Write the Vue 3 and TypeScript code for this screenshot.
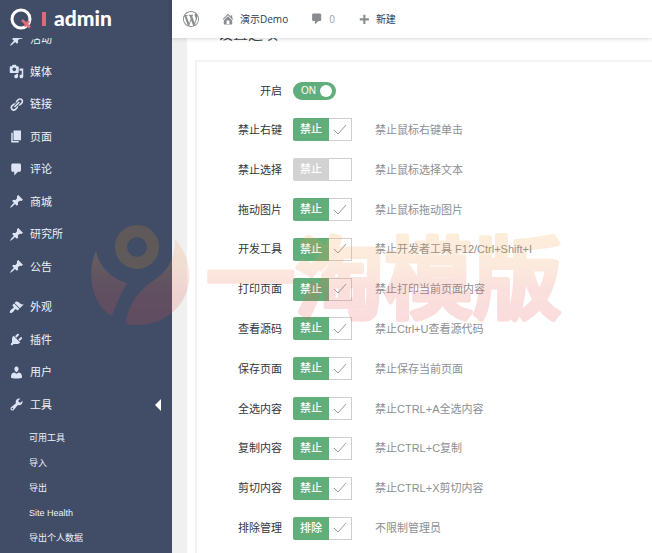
<script setup lang="ts">
import { reactive, ref } from 'vue'

interface MenuItem {
  label: string
  icon: string
  open?: boolean
}

interface Option {
  id: string
  label: string
  action: string
  hint: string
  on: boolean
}

const icons: Record<string, string> = {
  post: 'M10.44 3.02l1.82-1.82 6.36 6.35-1.83 1.82c-1.05-.68-2.48-.57-3.41.36l-.75.75c-.92.93-1.04 2.35-.35 3.41l-1.83 1.82-2.41-2.41-2.8 2.79c-.42.42-3.38 2.71-3.8 2.29s1.86-3.39 2.28-3.81l2.79-2.79L4.1 9.36l1.83-1.82c1.05.69 2.48.57 3.4-.36l.75-.75c.93-.92 1.05-2.35.36-3.41z',
  media: 'M13 11V4c0-.55-.45-1-1-1h-1.67L9 1H5L3.67 3H2c-.55 0-1 .45-1 1v7c0 .55.45 1 1 1h10c.55 0 1-.45 1-1zM7 4.5c1.38 0 2.5 1.12 2.5 2.5S8.38 9.5 7 9.5 4.5 8.38 4.5 7 5.62 4.5 7 4.5zM14 6h5v10.5c0 1.38-1.12 2.5-2.5 2.5S14 17.88 14 16.5s1.12-2.5 2.5-2.5c.17 0 .34.02.5.05V9h-3V6zm-4 8.05V13h2v3.5c0 1.38-1.12 2.5-2.5 2.5S7 17.88 7 16.5 8.12 14 9.5 14c.17 0 .34.02.5.05z',
  links: 'M17.74 2.76c1.68 1.69 1.68 4.41 0 6.1l-1.53 1.52c-1.12 1.12-2.7 1.47-4.14 1.09l2.62-2.61.76-.77.76-.76c.84-.84.84-2.2 0-3.04-.84-.85-2.2-.85-3.04 0l-.77.76-3.38 3.38c-.37-1.44-.02-3.02 1.1-4.14l1.52-1.53c1.69-1.68 4.42-1.68 6.1 0zM8.59 13.43l5.34-5.34c.42-.42.42-1.1 0-1.52-.44-.43-1.13-.39-1.53 0l-5.33 5.34c-.42.42-.42 1.1 0 1.52.44.43 1.13.39 1.52 0zm-.76 2.29l4.14-4.15c.38 1.44.03 3.02-1.09 4.14l-1.52 1.53c-1.69 1.68-4.41 1.68-6.1 0-1.68-1.68-1.68-4.42 0-6.1l1.53-1.52c1.12-1.12 2.7-1.47 4.14-1.1l-4.14 4.15c-.85.84-.85 2.2 0 3.05.84.84 2.2.84 3.04 0z',
  page: 'M6 15V2h10v13H6zm-1 1h8v2H3V5h2v11z',
  comments: 'M5 2h9c1.1 0 2 .9 2 2v7c0 1.1-.9 2-2 2h-2l-5 5v-5H5c-1.1 0-2-.9-2-2V4c0-1.1.9-2 2-2z',
  appearance: 'M14.48 11.06L7.41 3.99l1.5-1.5c.5-.56 2.3-.47 3.51.32 1.21.8 1.43 1.28 2.91 2.1 1.18.64 2.45 1.26 4.45.85zm-.71.71L6.7 4.7 4.93 6.47c-.39.39-.39 1.02 0 1.41l1.06 1.06c.39.39.39 1.03 0 1.42-.6.6-1.43 1.11-2.21 1.69-.35.26-.7.53-1.01.84C1.43 14.23.4 16.08 1.4 17.07c.99 1 2.84-.03 4.18-1.36.31-.31.58-.66.85-1.02.57-.78 1.08-1.61 1.69-2.21.39-.39 1.02-.39 1.41 0l1.06 1.06c.39.39 1.02.39 1.41 0z',
  plugins: 'M13.11 4.36L9.87 7.6 8 5.73l3.24-3.24c.35-.34 1.05-.2 1.56.32.52.51.66 1.21.31 1.55zm-8 1.77l.91-1.12 9.01 9.01-1.19.84c-.71.71-2.63 1.16-3.82 1.16H6.14L4.9 17.26c-.59.59-1.54.59-2.12 0-.59-.58-.59-1.53 0-2.12l1.24-1.24v-3.88c0-1.13.4-3.19 1.09-3.89zm7.26 3.97l3.24-3.24c.34-.35 1.04-.21 1.55.31.52.51.66 1.21.31 1.55l-3.24 3.25z',
  users: 'M10 9.25c-2.27 0-2.73-3.44-2.73-3.44C7 4.02 7.82 2 9.97 2c2.16 0 2.98 2.02 2.71 3.81 0 0-.41 3.44-2.68 3.44zm0 2.57L12.72 10c2.39 0 4.52 2.33 4.52 4.53v2.49s-3.65 1.13-7.24 1.13c-3.65 0-7.24-1.13-7.24-1.13v-2.49c0-2.25 1.94-4.48 4.47-4.48z',
  tools: 'M16.68 9.77c-1.34 1.34-3.3 1.67-4.95.99l-5.41 6.52c-.99.99-2.59.99-3.58 0s-.99-2.59 0-3.57l6.52-5.42c-.68-1.65-.35-3.61.99-4.95 1.28-1.28 3.12-1.62 4.72-1.06l-2.89 2.89 2.82 2.82 2.86-2.87c.53 1.58.18 3.39-1.08 4.65zM3.81 16.21c.4.39 1.04.39 1.43 0 .4-.4.4-1.04 0-1.43-.39-.4-1.03-.4-1.43 0-.39.39-.39 1.03 0 1.43z',
  home: 'M16 8.5l1.53 1.53-1.06 1.06L10 4.6l-6.47 6.49-1.06-1.06L10 2.5l4 4v-2h2v4zm-6-2.46l6 5.99V18H4v-5.97zM12 17v-5H8v5h4z',
  plus: 'M17 9v3h-5v5H9v-5H4V9h5V4h3v5h5z',
  wordpress: 'M20 10c0-5.51-4.49-10-10-10C4.48 0 0 4.49 0 10c0 5.52 4.48 10 10 10 5.51 0 10-4.48 10-10zM7.78 15.37L4.37 6.22c.55-.02 1.17-.08 1.17-.08.5-.06.44-1.13-.06-1.11 0 0-1.45.11-2.37.11-.18 0-.37 0-.58-.01C4.12 2.69 6.87 1.11 10 1.11c2.33 0 4.45.87 6.05 2.34-.68-.11-1.65.39-1.65 1.58 0 .74.45 1.36.9 2.1.35.61.55 1.36.55 2.46 0 1.49-1.4 5-1.4 5l-3.03-8.37c.54-.02.82-.17.82-.17.5-.05.44-1.25-.06-1.22 0 0-1.44.12-2.38.12-.87 0-2.33-.12-2.33-.12-.5-.03-.56 1.2-.06 1.22l.92.08 1.26 3.41zM17.41 10c.24-.64.74-1.87.43-4.25.7 1.29 1.05 2.71 1.05 4.25 0 3.29-1.73 6.24-4.4 7.78.97-2.59 1.94-5.2 2.92-7.78zM6.1 18.09C3.12 16.65 1.11 13.53 1.11 10c0-1.3.23-2.48.72-3.59C3.25 10.3 4.67 14.2 6.1 18.09zm4.03-6.63l2.58 6.98c-.86.29-1.76.45-2.71.45-.79 0-1.57-.11-2.29-.33.81-2.38 1.62-4.74 2.42-7.1z',
}

const contentMenu: MenuItem[] = [
  { label: '活动', icon: 'post' },
  { label: '媒体', icon: 'media' },
  { label: '链接', icon: 'links' },
  { label: '页面', icon: 'page' },
  { label: '评论', icon: 'comments' },
  { label: '商城', icon: 'post' },
  { label: '研究所', icon: 'post' },
  { label: '公告', icon: 'post' },
]

const systemMenu: MenuItem[] = [
  { label: '外观', icon: 'appearance' },
  { label: '插件', icon: 'plugins' },
  { label: '用户', icon: 'users' },
  { label: '工具', icon: 'tools', open: true },
]

const toolsMenu: string[] = ['可用工具', '导入', '导出', 'Site Health', '导出个人数据']

const enabled = ref<boolean>(true)

const options = reactive<Option[]>([
  { id: 'right-click', label: '禁止右键', action: '禁止', hint: '禁止鼠标右键单击', on: true },
  { id: 'select', label: '禁止选择', action: '禁止', hint: '禁止鼠标选择文本', on: false },
  { id: 'drag', label: '拖动图片', action: '禁止', hint: '禁止鼠标拖动图片', on: true },
  { id: 'devtools', label: '开发工具', action: '禁止', hint: '禁止开发者工具 F12/Ctrl+Shift+I', on: true },
  { id: 'print', label: '打印页面', action: '禁止', hint: '禁止打印当前页面内容', on: true },
  { id: 'source', label: '查看源码', action: '禁止', hint: '禁止Ctrl+U查看源代码', on: true },
  { id: 'save', label: '保存页面', action: '禁止', hint: '禁止保存当前页面', on: true },
  { id: 'select-all', label: '全选内容', action: '禁止', hint: '禁止CTRL+A全选内容', on: true },
  { id: 'copy', label: '复制内容', action: '禁止', hint: '禁止CTRL+C复制', on: true },
  { id: 'cut', label: '剪切内容', action: '禁止', hint: '禁止CTRL+X剪切内容', on: true },
  { id: 'admins', label: '排除管理', action: '排除', hint: '不限制管理员', on: true },
])
</script>

<template>
  <div class="page">
    <a class="brand" href="#">
      <svg class="brand-mark" viewBox="0 0 24 24" aria-hidden="true">
        <circle cx="12" cy="12" r="9" fill="none" stroke="#fff" stroke-width="3" />
        <path d="M13 13l8 7.500M20 14l-4.500 5.500" fill="none" stroke="#e0707c" stroke-width="2.600" />
      </svg>
      <span class="brand-bar"></span>
      <span class="brand-name">admin</span>
    </a>

    <header class="topbar">
      <a class="wp" href="#" aria-label="WordPress">
        <svg class="icon" viewBox="0 0 20 20"><path :d="icons.wordpress" /></svg>
      </a>
      <a class="bar-link" href="#">
        <svg class="icon" viewBox="0 0 20 20"><path :d="icons.home" /></svg>演示Demo
      </a>
      <a class="bar-link count" href="#">
        <svg class="icon" viewBox="0 0 20 20"><path :d="icons.comments" /></svg>0
      </a>
      <a class="bar-link" href="#">
        <svg class="icon" viewBox="0 0 20 20"><path :d="icons.plus" /></svg>新建
      </a>
    </header>

    <aside class="sidebar">
      <nav class="menu">
        <div class="group content-group">
          <a v-for="item in contentMenu" :key="item.label" class="item" href="#">
            <svg class="icon" viewBox="0 0 20 20"><path :d="icons[item.icon]" /></svg>
            <span>{{ item.label }}</span>
          </a>
        </div>
        <div class="group system-group">
          <a v-for="item in systemMenu" :key="item.label" class="item" :class="{ open: item.open }" href="#">
            <svg class="icon" viewBox="0 0 20 20"><path :d="icons[item.icon]" /></svg>
            <span>{{ item.label }}</span>
          </a>
        </div>
        <div class="submenu">
          <a v-for="entry in toolsMenu" :key="entry" class="sub-item" href="#">{{ entry }}</a>
        </div>
      </nav>
    </aside>

    <main class="content">
      <div class="panel">
        <h1 class="title">设置选项</h1>
        <form class="card" @submit.prevent>
          <div class="row first">
            <label class="name" for="enabled">开启</label>
            <label class="switch" :class="{ off: !enabled }">
              <input id="enabled" v-model="enabled" type="checkbox" />
              <span class="switch-text">{{ enabled ? 'ON' : 'OFF' }}</span>
              <span class="knob"></span>
            </label>
          </div>
          <div class="rows">
            <div v-for="option in options" :key="option.id" class="row">
              <label class="name" :for="option.id">{{ option.label }}</label>
              <label class="tick" :class="{ off: !option.on }">
                <input :id="option.id" v-model="option.on" type="checkbox" />
                <span class="action">{{ option.action }}</span>
                <span class="box">
                  <svg v-if="option.on" viewBox="0 0 14 12" aria-hidden="true">
                    <path d="M1 6l4 4 8-9" />
                  </svg>
                </span>
              </label>
              <span class="hint">{{ option.hint }}</span>
            </div>
          </div>
        </form>
      </div>
    </main>

    <svg class="watermark" viewBox="0 0 480 110" aria-hidden="true">
      <defs>
        <linearGradient id="wash" gradientUnits="userSpaceOnUse" x1="0" y1="10" x2="0" y2="100">
          <stop offset="0" stop-color="#f7a23c" />
          <stop offset="0.300" stop-color="#f49a50" />
          <stop offset="0.600" stop-color="#ea5f50" />
          <stop offset="1" stop-color="#e6484c" />
        </linearGradient>
      </defs>
      <g fill="url(#wash)">
        <circle cx="47" cy="22" r="16" fill="none" stroke="#e8902c" stroke-width="12" />
        <path d="M6 26C9 42 22 54 37 58C31 68 26 79 22 91C2 80-4 48 6 26z" />
        <path d="M85 14C104 36 105 66 84 86C71 98 54 102 36 99C37 82 48 66 63 56C78 46 85 34 85 14z" />
        <text x="116" y="86" font-size="89" stroke="url(#wash)" stroke-width="5" stroke-linejoin="round">一淘模版</text>
      </g>
    </svg>
  </div>
</template>

<style>
body {
  margin: 0;
}
</style>

<style scoped>
.page {
  position: relative;
  display: grid;
  grid-template-columns: 172px 1fr;
  grid-template-rows: 38px 1fr;
  height: 100vh;
  overflow: hidden;
  background: #f0f0f1;
  font-family: "Liberation Sans", "Noto Sans CJK SC", sans-serif;
  font-size: 11px;
  line-height: 16px;
}

a {
  color: inherit;
  text-decoration: none;
}

.icon {
  flex: none;
  width: 14px;
  height: 14px;
  fill: currentColor;
}

.brand {
  display: flex;
  align-items: center;
  padding-left: 9px;
  background: #414d66;
  color: #fff;
}

.brand-mark {
  width: 24px;
  height: 24px;
}

.brand-bar {
  width: 4px;
  height: 14px;
  margin: 0 8px 0 9px;
  background: #dc6b78;
}

.brand-name {
  font-family: Lato, sans-serif;
  font-size: 21px;
  font-weight: 900;
  line-height: 32px;
  padding-bottom: 3px;
}

.topbar {
  z-index: 1;
  display: flex;
  align-items: center;
  gap: 22px;
  padding-left: 11px;
  background: #fff;
  box-shadow: 0 1px 4px rgba(0, 0, 0, 0.15);
  color: #2c3a55;
  font-family: "Open Sans", "Noto Sans CJK SC", sans-serif;
  font-size: 10px;
}

.topbar .icon {
  color: #8a8c90;
}

.wp,
.bar-link {
  display: flex;
  flex: none;
  align-items: center;
  gap: 5px;
}

.wp .icon {
  width: 16px;
  height: 16px;
}

.count {
  color: #a0a3a8;
}

.sidebar {
  overflow: hidden;
  background: #414d66;
  color: #eef1fa;
}

/* The menu is scrolled so that its first entry sits half under the brand. */
.menu {
  display: flex;
  flex-direction: column;
  margin-top: -15px;
}

.group {
  display: grid;
  grid-auto-rows: 1fr;
}

.content-group {
  height: 260px;
  margin-bottom: 8px;
}

.system-group {
  height: 130px;
}

.item {
  position: relative;
  display: flex;
  align-items: center;
  gap: 6px;
  padding-left: 9px;
}

.item .icon {
  width: 15px;
  height: 15px;
  color: #dce4f6;
}

.item.open::after {
  content: "";
  position: absolute;
  right: 11px;
  border: 6px solid transparent;
  border-left-width: 0;
  border-right-color: #fff;
}

.submenu {
  display: flex;
  flex-direction: column;
  padding: 5px 0 4px 29px;
  font-size: 9px;
}

.sub-item {
  line-height: 25px;
}

.content {
  display: flex;
  padding-left: 15px;
  overflow: hidden;
}

.panel {
  display: flex;
  flex: 1;
  flex-direction: column;
  padding-left: 8px;
  background: #fff;
}

.title {
  margin: -14px 0 16px 23px;
  color: #3c434a;
  font-size: 15px;
  font-weight: 400;
  line-height: 20px;
}

.card {
  flex: 1;
  border: 2px solid #f3f3f4;
  border-width: 2px 0 0 2px;
}

.rows {
  display: grid;
  grid-auto-rows: 1fr;
  height: 438px;
}

.row {
  display: grid;
  grid-template-columns: 85px 59px 1fr;
  align-items: center;
  column-gap: 11px;
}

.first {
  height: 38px;
  padding-top: 10px;
}

.name {
  color: #32373c;
  text-align: right;
}

.hint {
  padding-left: 12px;
  color: #8c8f94;
}

input {
  position: absolute;
  opacity: 0;
  margin: 0;
}

.switch {
  display: flex;
  align-items: center;
  justify-content: space-between;
  width: 43px;
  height: 18px;
  box-sizing: border-box;
  padding: 0 4px 0 8px;
  border-radius: 9px;
  background: #62ae7a;
  color: #fff;
  font-size: 10px;
  cursor: pointer;
}

.switch.off {
  background: #c8c8c8;
}

.knob {
  width: 12px;
  height: 12px;
  border-radius: 50%;
  background: #fff;
}

.tick {
  display: flex;
  height: 23px;
  cursor: pointer;
}

.action {
  width: 36px;
  border-radius: 2px 0 0 2px;
  background: #62ae7a;
  color: #fff;
  font-weight: 500;
  line-height: 23px;
  text-align: center;
}

.box {
  display: flex;
  flex: 1;
  align-items: center;
  justify-content: center;
  border: 1px solid #cfcfcf;
  border-left: 0;
}

.box svg {
  width: 14px;
  height: 12px;
  fill: none;
  stroke: #999;
}

.off .action {
  background: #d2d2d2;
}

/* Stamp laid over both the sidebar and the panel. */
.watermark {
  position: absolute;
  z-index: 2;
  top: 225px;
  left: 90px;
  width: 480px;
  height: 110px;
  opacity: 0.19;
  pointer-events: none;
  font-family: "Noto Sans CJK SC", sans-serif;
  font-weight: 500;
}
</style>
